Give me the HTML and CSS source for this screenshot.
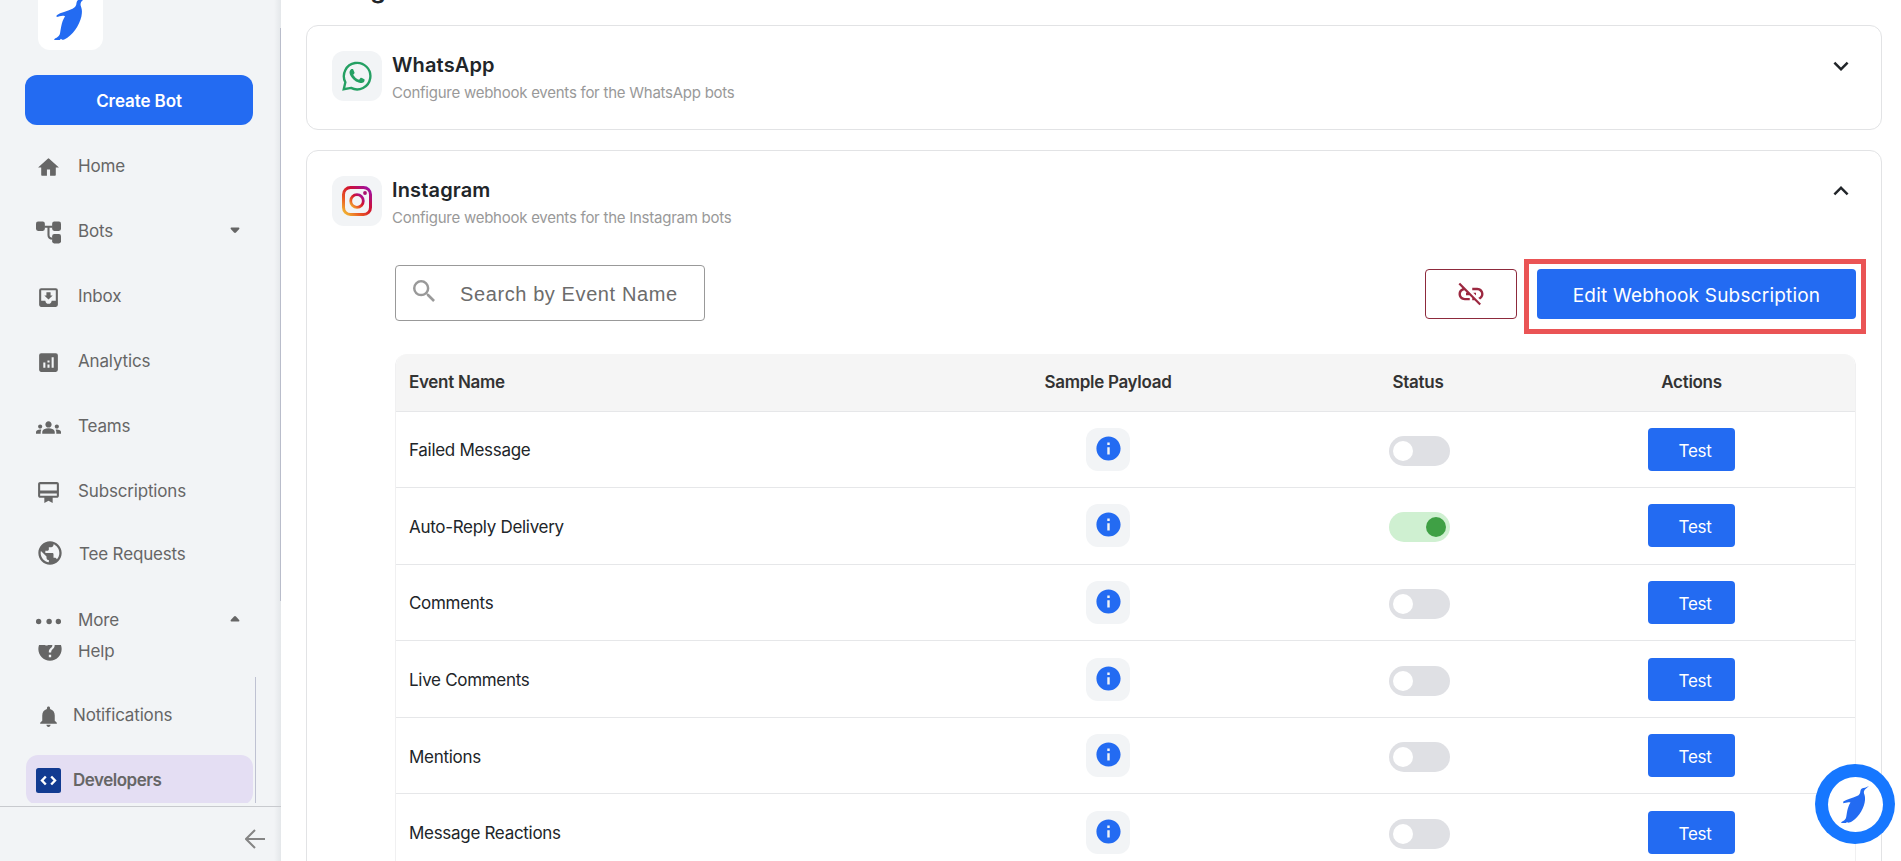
FILE: index.html
```html
<!DOCTYPE html>
<html lang="en">
<head>
<meta charset="utf-8">
<title>Webhook Events</title>
<link rel="stylesheet" href="styles.css">
</head>
<body>
<svg width="0" height="0" class="defs">
  <defs>
    <symbol id="bird" viewBox="0 0 28 37"><path d="M28 0 24.500 3C23.400 4 22.700 5.200 22.900 7 23.400 8.800 24.300 10 24 14 23.600 21 18 31 11.500 35 10 36 8.500 36.700 7 36.800L6 36 5 37H0L.8 35.800C3 34.500 4 34 5 32 6 28 6 22 9.500 16.500 7 15.500 4.500 16.800 2.200 17.200L2.300 15.600C6 13 11 12.500 16 10 18.500 9 19.200 7.500 19.400 5 19.700 2.500 21.500 1.700 24 1.700Z"/></symbol>
    <symbol id="info" viewBox="0 0 24 24"><path d="M12 2C6.480 2 2 6.480 2 12s4.480 10 10 10 10-4.480 10-10S17.520 2 12 2zm1 15h-2v-6h2v6zm0-8h-2V7h2v2z"/></symbol>
    <symbol id="chev" viewBox="0 0 24 24"><path d="M7.410 8.590 12 13.170l4.590-4.580L18 10l-6 6-6-6z"/></symbol>
    <symbol id="drop" viewBox="0 0 10 7"><path d="M1.300 0.500H8.700Q10 0.900 9.200 2L6 5.500Q5 6.400 4 5.500L.8 2Q0 .9 1.300.5z"/></symbol>
    <linearGradient id="ig" x1="0" y1="1" x2="1" y2="0"><stop offset="0" stop-color="#f2c233"/><stop offset=".3" stop-color="#ea5a25"/><stop offset=".6" stop-color="#d0102f"/><stop offset="1" stop-color="#9a10b0"/></linearGradient>
  </defs>
</svg>
<div class="app">
  <aside class="sidebar">
    <div class="logo"><svg><use href="#bird"/></svg></div>
    <button class="create">Create Bot</button>
    <nav class="nav">
      <a class="item"><svg viewBox="0 0 24 24"><path d="M10.500 20v-6h3v6h4.500c.6 0 1-.4 1-1v-7h3L12.700 3.500a1 1 0 0 0-1.400 0L2 12h3v7c0 .6.4 1 1 1z"/></svg><span>Home</span></a>
      <a class="item"><svg viewBox="0 0 24 24"><rect x="0" y="1.500" width="8.500" height="9" rx="2"/><rect x="15.500" y="1.500" width="8.500" height="9" rx="2"/><rect x="15.500" y="13.500" width="8.500" height="9" rx="2"/><path d="M8 6.500h8M12 6.500v8q0 3.500 4 3.500" fill="none" stroke="currentColor" stroke-width="2"/></svg><span>Bots</span><svg class="caret"><use href="#drop"/></svg></a>
      <a class="item"><svg viewBox="0 0 24 24"><path d="M19 3H5a2 2 0 0 0-2 2v14c0 1.100.9 2 2 2h14a2 2 0 0 0 2-2V5a2 2 0 0 0-2-2zm0 12h-4c0 1.660-1.350 3-3 3s-3-1.340-3-3H4.990V5H19v10zm-3-5h-2V7h-4v3H8l4 4 4-4z"/></svg><span>Inbox</span></a>
      <a class="item"><svg viewBox="0 0 24 24"><path d="M19 3H5a2 2 0 0 0-2 2v14c0 1.100.9 2 2 2h14a2 2 0 0 0 2-2V5a2 2 0 0 0-2-2zM9 17H7v-5h2v5zm4 0h-2v-3h2v3zm0-5h-2v-2h2v2zm4 5h-2V7h2v10z"/></svg><span>Analytics</span></a>
      <a class="item"><svg viewBox="0 0 24 24"><path d="M12 12.750c1.630 0 3.070.39 4.240.9 1.080.48 1.760 1.560 1.760 2.730V18H6v-1.610c0-1.180.68-2.260 1.760-2.730 1.170-.52 2.610-.91 4.240-.91zM4 13c1.100 0 2-.9 2-2s-.9-2-2-2-2 .9-2 2 .9 2 2 2zm1.130 1.100C4.760 14.040 4.390 14 4 14c-.99 0-1.930.21-2.780.58A2.010 2.010 0 0 0 0 16.430V18h4.500v-1.610c0-.83.23-1.610.63-2.290zM20 13c1.100 0 2-.9 2-2s-.9-2-2-2-2 .9-2 2 .9 2 2 2zm4 3.430c0-.81-.48-1.530-1.220-1.850A6.950 6.950 0 0 0 20 14c-.39 0-.76.040-1.130.1.400.68.630 1.460.630 2.290V18H24zM12 6c1.660 0 3 1.340 3 3s-1.340 3-3 3-3-1.340-3-3 1.340-3 3-3z"/></svg><span>Teams</span></a>
      <a class="item"><svg viewBox="0 0 24 24"><path d="M20 2H4c-1.110 0-2 .89-2 2v11c0 1.110.89 2 2 2h4v5l4-2 4 2v-5h4c1.110 0 2-.89 2-2V4c0-1.110-.89-2-2-2zm0 13H4v-2h16v2zm0-5H4V4h16v6z"/></svg><span>Subscriptions</span></a>
      <a class="item tee"><svg viewBox="0 0 24 24"><path d="M12 2C6.480 2 2 6.480 2 12s4.480 10 10 10 10-4.480 10-10S17.520 2 12 2zm-1 17.930c-3.950-.49-7-3.850-7-7.930 0-.62.080-1.210.21-1.790L9 15v1c0 1.100.9 2 2 2v1.930zm6.900-2.540c-.26-.81-1-1.390-1.900-1.390h-1v-3c0-.55-.45-1-1-1H8v-2h2c.55 0 1-.45 1-1V7h2c1.100 0 2-.9 2-2v-.41c2.930 1.190 5 4.060 5 7.410 0 2.080-.8 3.970-2.100 5.390z"/></svg><span>Tee Requests</span></a>
      <a class="item more"><svg viewBox="0 0 24 24"><circle cx="2.500" cy="12" r="2.600"/><circle cx="12.600" cy="12" r="2.600"/><circle cx="21.500" cy="12" r="2.600"/></svg><span>More</span><svg class="caret up"><use href="#drop"/></svg></a>
    </nav>
    <div class="submenu">
      <a class="item help"><svg viewBox="0 0 24 24"><path d="M12 2C6.480 2 2 6.480 2 12s4.480 10 10 10 10-4.480 10-10S17.520 2 12 2zm1 17h-2v-2h2v2zm2.070-7.750-.9.920C13.450 12.900 13 13.500 13 15h-2v-.5c0-1.100.45-2.100 1.170-2.830l1.240-1.260c.37-.36.590-.86.590-1.410 0-1.100-.9-2-2-2s-2 .9-2 2H8c0-2.210 1.790-4 4-4s4 1.790 4 4c0 .88-.36 1.680-.93 2.250z"/></svg><span>Help</span></a>
      <a class="item"><svg viewBox="0 0 24 24"><path d="M12 22c1.100 0 2-.9 2-2h-4c0 1.100.9 2 2 2zm6-6v-5c0-3.070-1.630-5.640-4.500-6.320V4c0-.83-.67-1.500-1.500-1.500s-1.500.67-1.500 1.500v.68C7.640 5.360 6 7.920 6 11v5l-2 2v1h16v-1l-2-2z"/></svg><span>Notifications</span></a>
      <a class="item active"><svg viewBox="0 0 25 25"><rect width="25" height="25" rx="2.500" fill="#123b91"/><path d="M9.800 8.500 6 12.500l3.800 4M15.200 8.500l3.800 4-3.800 4" fill="none" stroke="#fff" stroke-width="2.400"/></svg><span>Developers</span></a>
    </div>
    <div class="foot"><svg viewBox="0 0 20 20"><path d="M10 1 1 10l9 9M1 10h19" fill="none" stroke="currentColor" stroke-width="2"/></svg></div>
  </aside>
  <main class="main">
    <h1>Configure Webhook Events</h1>
    <section class="card">
      <header class="head">
        <div class="tile"><svg viewBox="0 0 24 24"><g fill="#25a063"><path d="M17.472 14.382c-.297-.149-1.758-.867-2.030-.967-.273-.099-.471-.148-.67.150-.197.297-.767.966-.940 1.164-.173.199-.347.223-.644.075-.297-.150-1.255-.463-2.390-1.475-.883-.788-1.480-1.761-1.653-2.059-.173-.297-.018-.458.130-.606.134-.133.298-.347.446-.520.149-.174.198-.298.298-.497.099-.198.050-.371-.025-.520-.075-.149-.669-1.612-.916-2.207-.242-.579-.487-.500-.669-.510-.173-.008-.371-.010-.570-.010-.198 0-.520.074-.792.372-.272.297-1.040 1.016-1.040 2.479 0 1.462 1.065 2.875 1.213 3.074.149.198 2.096 3.200 5.077 4.487.709.306 1.262.489 1.694.625.712.227 1.360.195 1.871.118.571-.085 1.758-.719 2.006-1.413.248-.694.248-1.289.173-1.413-.074-.124-.272-.198-.570-.347z"/><path d="M1.400 22.600 2.700 17A10.600 10.600 0 1 1 7.200 21.500z" fill="none" stroke="#25a063" stroke-width="1.900"/></g></svg></div>
        <div class="titles"><h2>WhatsApp</h2><p>Configure webhook events for the WhatsApp bots</p></div>
        <svg class="chev"><use href="#chev"/></svg>
      </header>
    </section>
    <section class="card open">
      <header class="head">
        <div class="tile"><svg viewBox="0 0 30 30"><g fill="none" stroke="url(#ig)"><rect x="1.500" y="1.500" width="27" height="27" rx="7" stroke-width="3"/><circle cx="15" cy="15" r="6.300" stroke-width="2.800"/><circle cx="23" cy="7" r="1.900" fill="#a8126f" stroke="none"/></g></svg></div>
        <div class="titles"><h2>Instagram</h2><p>Configure webhook events for the Instagram bots</p></div>
        <svg class="chev up"><use href="#chev"/></svg>
      </header>
      <div class="body">
        <div class="tools">
          <div class="search"><svg viewBox="3 3 17.500 17.500"><path d="M15.500 14h-.79l-.28-.27A6.471 6.471 0 0 0 16 9.500 6.500 6.500 0 1 0 9.500 16c1.610 0 3.090-.59 4.230-1.570l.27.280v.79l5 4.990L20.490 19l-4.990-5zm-6 0C7.010 14 5 11.990 5 9.500S7.010 5 9.500 5 14 7.010 14 9.500 11.990 14 9.500 14z"/></svg><span>Search by Event Name</span></div>
          <div class="acts">
            <button class="unlink"><svg viewBox="0 0 24 24"><path d="M17 7h-4v1.900h4c1.710 0 3.100 1.390 3.100 3.100 0 1.430-.98 2.630-2.310 2.980l1.460 1.460C20.880 15.610 22 13.950 22 12c0-2.760-2.240-5-5-5zm-1 4h-2.190l2 2H16v-2zM2 4.270l3.110 3.110A4.991 4.991 0 0 0 2 12c0 2.760 2.240 5 5 5h4v-1.900H7c-1.710 0-3.100-1.390-3.100-3.100 0-1.590 1.210-2.900 2.760-3.070L8.730 11H8v2h2.730L13 15.270V17h1.730l4.010 4L20 19.740 3.270 3 2 4.270z"/></svg></button>
            <div class="mark"><button class="edit">Edit Webhook Subscription</button></div>
          </div>
        </div>
        <div class="table">
          <div class="row th"><div>Event Name</div><div>Sample Payload</div><div>Status</div><div>Actions</div></div>
          <div class="row"><div>Failed Message</div><div><i class="info"><svg><use href="#info"/></svg></i></div><div><b class="tog"></b></div><div><button class="test">Test</button></div></div>
          <div class="row"><div>Auto-Reply Delivery</div><div><i class="info"><svg><use href="#info"/></svg></i></div><div><b class="tog on"></b></div><div><button class="test">Test</button></div></div>
          <div class="row"><div>Comments</div><div><i class="info"><svg><use href="#info"/></svg></i></div><div><b class="tog"></b></div><div><button class="test">Test</button></div></div>
          <div class="row"><div>Live Comments</div><div><i class="info"><svg><use href="#info"/></svg></i></div><div><b class="tog"></b></div><div><button class="test">Test</button></div></div>
          <div class="row"><div>Mentions</div><div><i class="info"><svg><use href="#info"/></svg></i></div><div><b class="tog"></b></div><div><button class="test">Test</button></div></div>
          <div class="row"><div>Message Reactions</div><div><i class="info"><svg><use href="#info"/></svg></i></div><div><b class="tog"></b></div><div><button class="test">Test</button></div></div>
        </div>
      </div>
    </section>
  </main>
</div>
<div class="fab"><div><svg><use href="#bird"/></svg></div></div>
</body>
</html>
```
FILE: styles.css
```css
* { box-sizing: border-box; }
body { margin: 0; height: 861px; overflow: hidden; background: #fff; color: #212529; font-family: Inter, "Liberation Sans", sans-serif; font-size: 17px; letter-spacing: -0.3px; }
.defs { position: absolute; }
button { font: inherit; letter-spacing: inherit; border: 0; padding: 0; color: #fff; background: #236bf2; }
h1, h2, p { margin: 0; }
svg { fill: currentColor; display: block; flex: none; }
.app { display: flex; height: 861px; }

/* Sidebar */
.sidebar { width: 281px; height: 861px; flex: none; display: flex; flex-direction: column; color: #666; background: linear-gradient(#b9bdcb, #b9bdcb) 280px 28px / 1px 573px no-repeat, linear-gradient(90deg, #f2f4f6 274px, #e4e7ea 281px); }
.logo { width: 65px; height: 50px; margin-left: 38px; background: #fff; border-radius: 0 0 12px 12px; padding-left: 16px; overflow: hidden; color: #236bf2; flex: none; }
.logo svg { width: 32.500px; height: 43px; margin-top: -3.500px; }
.create { width: 228px; height: 50px; margin: 25px 0 0 25px; border-radius: 12px; font-weight: 600; letter-spacing: -0.1px; padding-top: 1px; flex: none; }
.nav { height: 520px; flex: none; padding: 9px 26px 0 25px; }
.item { display: flex; align-items: center; height: 65px; padding-left: 11px; }
.item > svg:first-child { width: 25px; height: 25px; margin-top: 2px; }
.item span { margin-left: 17px; line-height: 24px; margin-bottom: 1px; letter-spacing: -0.16px; }
.caret { width: 10px; height: 7px; margin: -3px 15px 0 auto; }
.caret.up { transform: rotate(180deg); }
.item.tee { height: 61px; }
.item.tee > svg:first-child { width: 28px; height: 28px; margin: -3px 0 0; }
.item.tee span { margin-left: 15px; margin-bottom: 2px; }
.item.more { height: 70px; }
.submenu { height: 158px; flex: none; overflow: hidden; padding-left: 26px; background: linear-gradient(#bfc2d2, #bfc2d2) 255px 32px / 1px 126px no-repeat; }
.submenu .item { padding-left: 10px; width: 227px; }
.submenu .item span { margin-left: 12px; }
.submenu .item.help { margin-top: -27px; }
.submenu .item.help > svg:first-child { width: 28px; height: 28px; margin-top: -4px; }
.submenu .item.help span { margin-left: 14px; margin-bottom: -1px; }
.submenu .item.active { height: 50px; margin-top: 7px; border-radius: 12px; background: #e4def3; font-weight: 600; }
.submenu .item.active > svg:first-child { margin-top: 1px; }
.submenu .item.active span { letter-spacing: -0.5px; margin-bottom: 0; }
.foot { margin-top: 3px; border-top: 1px solid #c8cace; flex: 1; padding: 22px 0 0 245px; color: #858585; }
.foot svg { width: 20px; height: 20px; }

/* Content */
.main { flex: 1; padding: 0 19px 0 25px; overflow: hidden; }
h1 { height: 25px; font-size: 25px; line-height: 32px; margin-top: -27px; margin-bottom: 27px; font-weight: 600; letter-spacing: -0.2px; }
.card { height: 105px; border: 1px solid #e2e3e5; border-radius: 12px; padding: 25px; }
.card.open { margin-top: 20px; height: 900px; }
.head { display: flex; height: 52px; }
.tile { width: 50px; height: 50px; border-radius: 12px; background: #f2f4f6; display: grid; place-items: center; }
.tile svg { width: 30px; height: 30px; }
.titles { margin-left: 10px; margin-top: 1px; flex: 1; }
h2 { font-size: 20px; line-height: 26px; font-weight: 600; letter-spacing: 0.15px; }
.titles p { font-size: 15px; line-height: 22px; margin-top: 4px; color: #999; letter-spacing: -0.25px; }
.chev { width: 30px; height: 30px; }
.chev.up { transform: rotate(180deg); }
.body { margin-left: 63px; }
.tools { display: flex; justify-content: space-between; height: 89px; padding-top: 37px; margin-bottom: 37px; }
.search { width: 310px; height: 56px; border: 1px solid #999; border-radius: 4px; display: flex; align-items: center; color: #6c6c6c; font: 20px "Liberation Sans", Arial, sans-serif; letter-spacing: .6px; padding-left: 17px; }
.search svg { width: 22px; height: 22px; color: #999; margin-top: -4px; }
.search span { margin-left: 25px; margin-top: 2px; }
.acts { display: flex; gap: 7px; margin-top: -6px; }
.unlink { width: 92px; height: 50px; margin-top: 10px; border: 1px solid #8d2a3c; border-radius: 4px; background: #fff; color: #9c2840; display: grid; place-items: center; }
.unlink svg { width: 30px; height: 30px; }
.mark { width: 342px; height: 75px; border: 5px solid #ea5455; padding: 5px 0 0 8px; margin-right: -10px; }
.edit { width: 319px; height: 50px; border-radius: 4px; font-size: 19px; letter-spacing: 0.2px; padding-top: 2px; }
.table { border: 1px solid #f0f0f1; border-top: 0; border-radius: 12px 12px 0 0; overflow: hidden; }
.row { display: grid; grid-template-columns: 556px 312px 308px 1fr; height: 76.6px; align-items: center; border-bottom: 1px solid #e6e7e9; }
.row > div { display: grid; justify-items: center; }
.row > div:first-child { justify-items: start; padding: 2px 0 0 13px; }
.row > div:last-child { padding-right: 44px; }
.th { height: 57.5px; background: #f5f5f5; color: #333; font-weight: 600; }
.row.th > div { padding-top: 0; }
.info { width: 44px; height: 43px; border-radius: 12px; background: #f2f4f6; color: #236bf2; padding: 6px 0 0 8px; }
.info svg { width: 29px; height: 29px; }
.tog { width: 61px; height: 30px; border-radius: 15px; background: #dfe0e4; padding: 5px 4px; margin: 3px 0 0 2px; }
.tog::before { content: ""; display: block; width: 20px; height: 20px; border-radius: 50%; background: #fff; }
.tog.on { background: #cff0d1; }
.tog.on::before { background: #3fa045; margin-left: 33px; }
.test { width: 87px; height: 43px; border-radius: 4px; padding: 3px 0 0 7px; }
.fab { position: absolute; left: 1815px; top: 764px; width: 80px; height: 80px; border-radius: 50%; background: #1677ff; display: grid; place-items: center; }
.fab div { width: 55px; height: 55px; border-radius: 50%; background: #fff; display: grid; place-items: center; color: #236bf2; }
.fab svg { width: 28px; height: 37px; }
```
